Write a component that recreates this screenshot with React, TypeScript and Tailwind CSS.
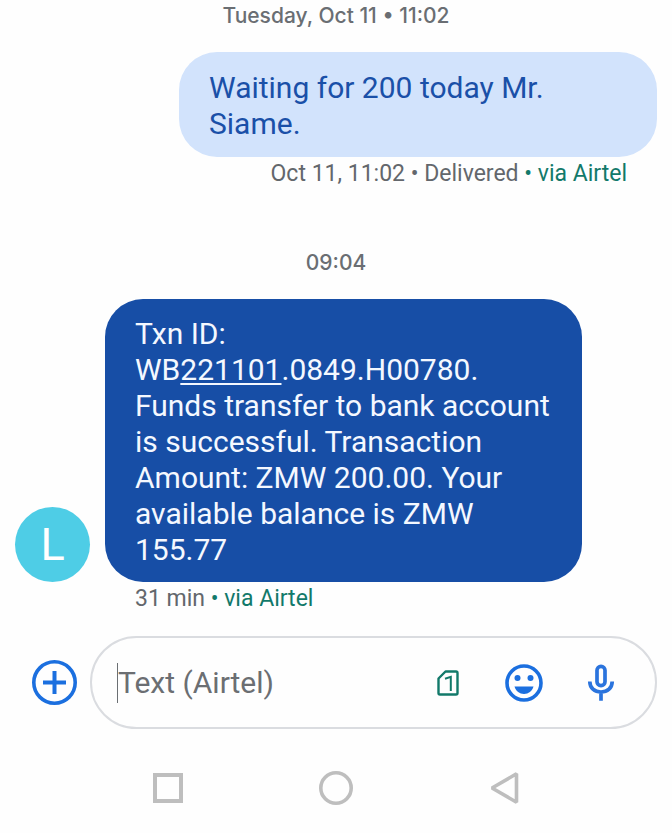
import { useState, type ReactNode } from "react";

function DayMarker({ children }: { children: ReactNode }) {
  return (
    <p className="text-center font-['Inter','Noto_Sans',sans-serif] text-[21px] leading-8 font-medium text-[#6a6e73]">
      {children}
    </p>
  );
}

function Status({ children, align }: { children: ReactNode; align: "left" | "right" }) {
  return (
    <p
      className={
        align === "right"
          ? "px-[30px] pt-px text-right text-[23px] leading-8 text-[#63676c]"
          : "px-[30px] pt-px text-[23px] leading-8 text-[#63676c]"
      }
    >
      {children} <span className="text-[#12796a]">• via Airtel</span>
    </p>
  );
}

function SimIcon() {
  return (
    <svg viewBox="0 0 22 26" className="h-[26px] w-[22px]" fill="none" stroke="#12796a" aria-hidden="true">
      <path d="M8.5 1.5H19Q20.5 1.5 20.5 3V23Q20.5 24.500 19 24.500H3Q1.500 24.500 1.500 23V8.500Z" strokeWidth="2.400" strokeLinejoin="round" />
      <path d="M8 8.800L13.800 6.800V21" strokeWidth="2" />
    </svg>
  );
}

function SmileIcon() {
  return (
    <svg viewBox="0 0 38 38" className="size-[38px]" aria-hidden="true">
      <circle cx="19" cy="19" r="17" fill="none" stroke="#1b6fdf" strokeWidth="3.600" />
      <circle cx="12.500" cy="14" r="3" fill="#1b6fdf" />
      <circle cx="25.500" cy="14" r="3" fill="#1b6fdf" />
      <path d="M9.500 22.500H28.500C27 27.200 23.500 30 19 30S11 27.200 9.500 22.500Z" fill="#1b6fdf" />
    </svg>
  );
}

function MicIcon() {
  return (
    <svg viewBox="0 0 28 38" className="h-[38px] w-7" fill="none" stroke="#2b74dd" strokeWidth="3.700" aria-hidden="true">
      <rect x="10" y="2.300" width="8" height="19.400" rx="4" />
      <path d="M2.800 17.500C2.800 24 7.500 28 14 28S25.200 24 25.200 17.500M14 28V36.800" />
    </svg>
  );
}

export default function App() {
  const [draft, setDraft] = useState("");

  return (
    <div className="flex min-h-screen flex-col bg-[#fefefe] font-['Roboto','Noto_Sans',sans-serif]">
      <main className="flex flex-col px-[15px]">
        <DayMarker>Tuesday, Oct 11 • 11:02</DayMarker>

        <section className="mt-5 ml-auto w-[478px] max-w-full">
          <p className="rounded-[38px] bg-[#d2e3fc] px-[30px] pt-[18px] pb-[15px] text-[30px] leading-9 text-[#1a50a8]">
            Waiting for 200 today Mr. Siame.
          </p>
          <Status align="right">Oct 11, 11:02 • Delivered</Status>
        </section>

        <div className="mt-[57px]">
          <DayMarker>09:04</DayMarker>
        </div>

        <section className="mt-5 grid grid-cols-[75px_minmax(0,477px)] gap-x-[15px]">
          <div className="flex size-[75px] items-center justify-center self-end rounded-full bg-[#4ecde6] text-[45px] text-white">
            L
          </div>
          <p className="rounded-[38px] bg-[#174ea6] px-[30px] pt-[17px] pb-[14px] text-[30px] leading-9 text-[#f4f8ff]">
            Txn ID:{" "}
            <span className="whitespace-nowrap">
              <span>WB</span>
              <a href="tel:221101" className="underline decoration-2 underline-offset-[3px]">
                221101
              </a>
              <span>.0849.H00780.</span>
            </span>{" "}
            Funds transfer to bank account is successful. Transaction Amount: ZMW 200.00. Your available balance
            is ZMW 155.77
          </p>
          <div className="col-start-2">
            <Status align="left">31 min</Status>
          </div>
        </section>
      </main>

      <form className="mt-[21px] flex items-center pr-[15px] pl-8" onSubmit={(e) => e.preventDefault()}>
        <button type="button" aria-label="Attach" className="mr-[13px] size-[45px] shrink-0">
          <svg viewBox="0 0 45 45" className="size-[45px]" fill="none" stroke="#1b6fdf" aria-hidden="true">
            <circle cx="22.500" cy="22.500" r="20.700" strokeWidth="3.600" />
            <path d="M11 22.500H34M22.500 11V34" strokeWidth="4" />
          </svg>
        </button>
        <div className="flex h-[93px] min-w-0 flex-1 items-center rounded-full border-2 border-[#dadce0] pr-10 pl-[25px]">
          <span className="h-10 w-px shrink-0 bg-[#6b6f73]" />
          <input
            type="text"
            aria-label="Message"
            placeholder="Text (Airtel)"
            value={draft}
            onChange={(e) => setDraft(e.target.value)}
            className="h-12 min-w-0 flex-1 text-[30px] text-[#202124] outline-none placeholder:text-[#6b6e72]"
          />
          <button type="button" aria-label="SIM 1" className="shrink-0">
            <SimIcon />
          </button>
          <button type="button" aria-label="Emoji" className="ml-[46px] shrink-0">
            <SmileIcon />
          </button>
          <button type="button" aria-label="Record voice" className="ml-11 shrink-0">
            <MicIcon />
          </button>
        </div>
      </form>

      <nav className="mt-[42px] grid grid-cols-3 justify-items-center px-[12.5%]">
        <button type="button" aria-label="Recent apps">
          <svg viewBox="0 0 34 34" className="size-[34px]" fill="none" stroke="#bebebe" strokeWidth="4" aria-hidden="true">
            <rect x="4" y="4" width="26" height="26" />
          </svg>
        </button>
        <button type="button" aria-label="Home">
          <svg viewBox="0 0 34 34" className="size-[34px]" fill="none" stroke="#bebebe" strokeWidth="3.600" aria-hidden="true">
            <circle cx="17" cy="17" r="15.200" />
          </svg>
        </button>
        <button type="button" aria-label="Back">
          <svg viewBox="0 0 34 34" className="size-[34px]" fill="none" stroke="#bebebe" strokeWidth="3.600" strokeLinejoin="bevel" aria-hidden="true">
            <path d="M29.500 2.800V31.200L5 17Z" />
          </svg>
        </button>
      </nav>
    </div>
  );
}
